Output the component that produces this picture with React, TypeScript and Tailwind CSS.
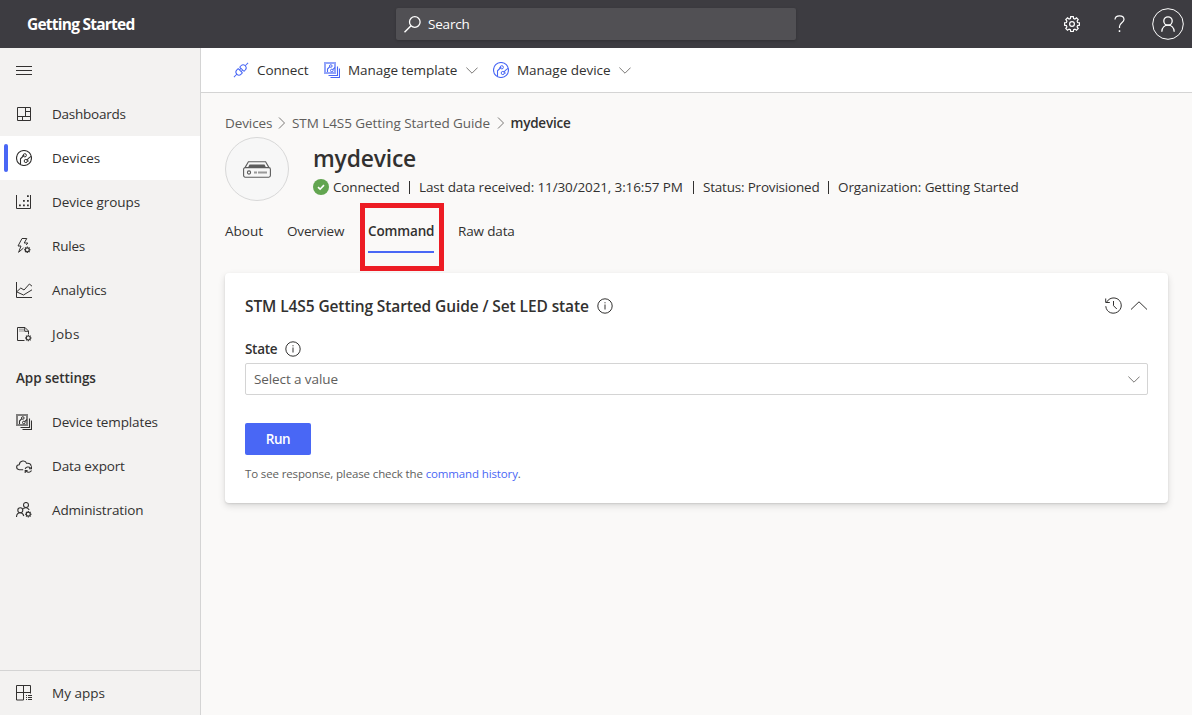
import type { ReactNode } from 'react';

type IconProps = { className?: string; children: ReactNode; size?: number };

function Icon({ className = '', children, size = 16 }: IconProps) {
  return (
    <svg
      width={size}
      height={size}
      viewBox={`0 0 ${size} ${size}`}
      fill="none"
      stroke="currentColor"
      strokeWidth="1"
      className={`block shrink-0 ${className}`}
    >
      {children}
    </svg>
  );
}

function MiniGear({ x, y }: { x: number; y: number }) {
  return (
    <g transform={`translate(${x} ${y})`}>
      <circle r="2" strokeWidth="1.2" />
      <path d="M0-3.3V-2M0 2V3.3M-3.3 0H-2M2 0H3.3M-2.3-2.3L-1.4-1.4M1.4 1.4L2.3 2.3M-2.3 2.3L-1.4 1.4M1.4-1.4L2.3-2.3" strokeWidth="1.1" />
    </g>
  );
}

const DashboardIcon = () => (
  <Icon>
    <path d="M1.5 1.5H14.5V14.5H1.5ZM9.5 1.5V10.5M9.5 5.5H14.5M1.5 10.5H14.5M6.5 10.5V14.5" />
  </Icon>
);
const DeviceIcon = () => (
  <Icon>
    <circle cx="8" cy="8" r="7.5" strokeWidth="1.1" />
    <circle cx="8.8" cy="5.3" r="1.6" />
    <circle cx="9.8" cy="11" r="1.6" />
    <path d="M7.3 6L4.5 8.8V14.2M11 9.8L13 7.8L15 6.4M8.3 5.5H6.5M11.3 11H12.8" strokeWidth="1.1" />
  </Icon>
);
const GroupsIcon = () => (
  <Icon>
    <path d="M.5 1V14.5H14.5V1" />
    <path
      d="M3 10.5h1.8v1.8H3zM7 10.5h1.8v1.8H7zM11 10.5h1.8v1.8H11zM7 6h1.8v1.8H7zM11 6h1.8v1.8H11zM11 1.2h1.8V3H11z"
      fill="currentColor"
      stroke="none"
    />
  </Icon>
);
const RulesIcon = () => (
  <Icon>
    <path d="M6 .5H10.8L8.2 5H11.8L10.2 7M6 .5L2 8H5L2.6 14.3L7.5 10" />
    <MiniGear x={11.3} y={11.8} />
  </Icon>
);
const AnalyticsIcon = () => (
  <Icon>
    <path d="M.5 0V15.5H16M1 9.5L4.8 6L8 8L13.4 2L16 4.2M1 10L7.5 13L16 7.8" />
  </Icon>
);
const JobsIcon = () => (
  <Icon>
    <path d="M8.5 14.5H1.5V1.5H9L12.5 5V8.3M8.7 1.5V5.3H12.5" />
    <path d="M3.5 3.2H8M3.5 5H8" strokeDasharray="1 1" />
    <MiniGear x={12.3} y={12} />
  </Icon>
);
const TemplatesIcon = () => (
  <Icon>
    <path d="M1 1H11V11H1Z" strokeWidth="2" opacity=".6" />
    <circle cx="6.8" cy="4" r="1.3" />
    <circle cx="7.8" cy="8.5" r="1.3" />
    <path d="M5.8 4.6L3.5 7V10M8.7 7.6L11 5.5M13.5 4.5V13.5H4.5M15.5 6.5V15.5H6.5" strokeWidth="1.1" />
  </Icon>
);
const ExportIcon = () => (
  <Icon>
    <path d="M7.2 11.7H3.3C-.3 11.2-.2 6.9 3.2 6.7C3.8 2.3 9.4 1.7 10.6 5.3C13 4.9 14.8 6.2 15.2 7.9" strokeWidth="1.1" />
    <path d="M9.2 11C9.8 8.9 12.8 8.2 14.5 10M15.5 8.2V10.7H13M15.5 12.5C14.6 14.4 11.8 14.9 10.1 13.2M9.2 15V12.6H11.6" strokeWidth="1.1" />
  </Icon>
);
const AdminIcon = () => (
  <Icon>
    <circle cx="10" cy="3" r="2.5" strokeWidth="1.1" />
    <circle cx="4.3" cy="8.2" r="2.5" strokeWidth="1.1" />
    <path d="M.5 15C.6 12 2.2 10.8 4.3 10.8C6.3 10.8 7.3 12 7.8 14M7.3 6.8C8.6 5.3 11.6 5.2 13.2 8" strokeWidth="1.1" />
    <MiniGear x={12.3} y={12.2} />
  </Icon>
);
const MyAppsIcon = () => (
  <Icon>
    <path d="M7.5 15H.5V.5H14.5V8.5M7.5.5V15M.5 7.5H14.5" />
    <path d="M10 10.5H11M12 10.5H16M10 12.5H11M12 12.5H16M10 14.5H11M12 14.5H16" />
  </Icon>
);
const PlugIcon = () => (
  <Icon>
    <g transform="rotate(-45 8 8)">
      <path d="M-2 8H2M14 8H18M7 4.7V11.3M7 5H5.2C1 5 1 11 5.2 11H7M9.2 4.7V11.3M9.2 5H11C15 5 15 11 11 11H9.2M7 6.8H9.2M7 9.2H9.2" />
    </g>
  </Icon>
);

const Chevron = ({ className = '' }: { className?: string }) => (
  <svg width="12" height="7" viewBox="0 0 12 7" fill="none" stroke="currentColor" className={`block shrink-0 ${className}`}>
    <path d="M.4.6L6 6.2L11.6.6" />
  </svg>
);
const CrumbChevron = () => (
  <svg width="8" height="12" viewBox="0 0 8 12" fill="none" stroke="currentColor" className="block shrink-0 text-[#7a7876]">
    <path d="M1 .5L6.5 6L1 11.5" />
  </svg>
);
const InfoIcon = () => (
  <Icon>
    <circle cx="8" cy="8" r="7.2" />
    <path d="M8 6.5V11.5M8 4.2V5.3" />
  </Icon>
);

function NavItem({ icon, label, active, tracking = 'tracking-[-0.12px]' }: { icon: ReactNode; label: string; active?: boolean; tracking?: string }) {
  return (
    <div className={`relative flex h-11 shrink-0 items-center gap-5 pl-4 ${active ? 'bg-white font-medium' : ''}`}>
      {active && <span className="absolute top-2 left-1 h-7 w-1 rounded-[2px] bg-[#4967f5]" />}
      {icon}
      <span className={tracking}>{label}</span>
    </div>
  );
}

export default function App() {
  return (
    <div className="flex h-[715px] w-[1192px] flex-col overflow-hidden bg-[#faf9f8] font-['Open_Sans','Noto_Sans',sans-serif] text-[13.5px] leading-5 tracking-[-0.12px] whitespace-nowrap text-[#323130]">
      <header className="flex h-12 shrink-0 items-center bg-[#3d3c41] pl-[27px] text-white">
        <div className="w-[369px] text-[15.5px] font-bold tracking-[-0.76px]">Getting Started</div>
        <div className="flex h-8 w-[400px] items-center gap-[7px] rounded-[2px] bg-[#515054] pl-2 shadow-[0_1px_3px_rgba(0,0,0,0.2)]">
          <Icon size={17}>
            <circle cx="10.8" cy="6" r="5.3" strokeWidth="1.3" />
            <path d="M7 9.8L.5 16.3" strokeWidth="1.5" />
          </Icon>
          <span className="tracking-[-0.2px]">Search</span>
        </div>
        <div className="ml-[268px] flex items-center">
          <Icon>
            <path
              d="M6.7.6H9.3L9.6 2.5L10.9 3L12.5 1.9L14.2 3.6L13.1 5.2L13.6 6.5L15.5 6.8V9.2L13.6 9.6L13.1 10.9L14.2 12.5L12.5 14.2L10.9 13.1L9.6 13.6L9.3 15.5H6.7L6.4 13.6L5.1 13.1L3.5 14.2L1.8 12.5L2.9 10.9L2.4 9.6L.5 9.2V6.8L2.4 6.5L2.9 5.2L1.8 3.6L3.5 1.9L5.1 3L6.4 2.5Z"
              strokeWidth="1.2"
            />
            <circle cx="8" cy="8" r="2.4" strokeWidth="1.2" />
          </Icon>
          <svg width="12" height="18" viewBox="0 0 12 18" fill="none" stroke="currentColor" strokeWidth="1.2" className="ml-[34px] block">
            <path d="M1 4.5C1.2-.4 10-.4 10 4.5C10 7.7 5.5 8 5.5 11.5V13" />
            <path d="M5.5 15.2V17" strokeWidth="1.5" />
          </svg>
          <Icon size={32} className="ml-[26px]">
            <circle cx="16" cy="16" r="15.3" />
            <circle cx="16" cy="13" r="4.2" strokeWidth="1.3" />
            <path d="M9.8 23.7C10.4 15 21.6 15 22.2 23.7" strokeWidth="1.3" />
          </Icon>
        </div>
      </header>

      <div className="flex min-h-0 flex-1">
        <nav className="flex w-[201px] shrink-0 flex-col border-r border-[#d4d4d4] bg-[#f3f2f1]">
          <div className="flex h-11 shrink-0 items-center pl-4">
            <Icon>
              <path d="M0 4.5H16M0 8.5H16M0 12.5H16" />
            </Icon>
          </div>
          <NavItem icon={<DashboardIcon />} label="Dashboards" tracking="tracking-[-0.24px]" />
          <NavItem icon={<DeviceIcon />} label="Devices" active tracking="tracking-[0.05px]" />
          <NavItem icon={<GroupsIcon />} label="Device groups" tracking="tracking-[-0.07px]" />
          <NavItem icon={<RulesIcon />} label="Rules" tracking="tracking-[-0.2px]" />
          <NavItem icon={<AnalyticsIcon />} label="Analytics" tracking="tracking-[-0.1px]" />
          <NavItem icon={<JobsIcon />} label="Jobs" tracking="tracking-[0.3px]" />
          <div className="flex h-11 shrink-0 items-center pl-4 font-semibold tracking-[-0.07px]">App settings</div>
          <NavItem icon={<TemplatesIcon />} label="Device templates" tracking="tracking-[-0.13px]" />
          <NavItem icon={<ExportIcon />} label="Data export" tracking="tracking-[-0.16px]" />
          <NavItem icon={<AdminIcon />} label="Administration" tracking="tracking-[-0.14px]" />
          <div className="mt-auto border-t border-[#d4d4d4]">
            <NavItem icon={<MyAppsIcon />} label="My apps" tracking="tracking-[0px]" />
          </div>
        </nav>

        <main className="flex min-w-0 flex-1 flex-col">
          <div className="flex h-[45px] shrink-0 items-center border-b border-[#d4d4d4] bg-white pl-8">
            <span className="text-[#4967f5]"><PlugIcon /></span>
            <span className="ml-2 w-[67px] tracking-[-0.1px]">Connect</span>
            <span className="text-[#4967f5]"><TemplatesIcon /></span>
            <span className="ml-2 w-[118px] tracking-[-0.07px]">Manage template</span>
            <Chevron className="text-[#7a7876]" />
            <span className="ml-[15px] text-[#4967f5]"><DeviceIcon /></span>
            <span className="ml-2 w-[102px] tracking-[-0.02px]">Manage device</span>
            <Chevron className="text-[#7a7876]" />
          </div>

          <div className="flex flex-1 flex-col px-6 pt-5">
            <div className="flex h-5 items-center text-[#605e5c]">
              <span className="w-[53px] tracking-[-0.1px]">Devices</span>
              <CrumbChevron />
              <span className="ml-[6px] w-[205px] tracking-[-0.07px]">STM L4S5 Getting Started Guide</span>
              <CrumbChevron />
              <span className="ml-[5.5px] font-semibold tracking-[-0.22px] text-[#323130]">mydevice</span>
            </div>

            <div className="mt-1 flex gap-6">
              <div className="flex h-16 w-16 items-center justify-center rounded-full border border-[#d8d8d8] bg-[#f7f7f7] text-[#5c5c5c]">
                <svg width="28" height="17" viewBox="0 0 28 17" fill="none" stroke="currentColor" strokeWidth="1.1" className="block">
                  <path d="M2 6.6L5.4.8H22.6L26 6.6" />
                  <rect x=".6" y="6.6" width="26.8" height="9.6" rx="1.6" />
                  <path d="M6.5 3.5H21.5L23 6.5H5Z" fill="currentColor" stroke="none" />
                  <circle cx="6" cy="11.5" r="1.6" />
                  <path d="M11 11.5H14M15 11.5H24" strokeWidth="1.8" opacity=".6" />
                </svg>
              </div>
              <div>
                <h1 className="mt-[6px] h-8 text-[22.8px] leading-8 font-semibold tracking-[-0.15px]">mydevice</h1>
                <div className="mt-[2px] flex h-5 items-center">
                  <svg width="16" height="16" viewBox="0 0 16 16" className="block">
                    <circle cx="8" cy="8" r="8" fill="#62a550" />
                    <path d="M5 8.2L7.1 10.2L11 6.1" fill="none" stroke="#fff" strokeWidth="1.6" />
                  </svg>
                  <span className="ml-1 w-[76px] tracking-[-0.15px]">Connected</span>
                  <span className="h-[13px] w-px bg-[#323130]" />
                  <span className="ml-[9px] w-[274px] tracking-[-0.13px]">Last data received: 11/30/2021, 3:16:57 PM</span>
                  <span className="h-[13px] w-px bg-[#323130]" />
                  <span className="ml-[9px] w-[125px] tracking-[-0.2px]">Status: Provisioned</span>
                  <span className="h-[13px] w-px bg-[#323130]" />
                  <span className="ml-[9px] tracking-[-0.1px]">Organization: Getting Started</span>
                </div>
              </div>
            </div>

            <div className="mt-2 flex h-11 items-center">
              <span className="w-[62px] tracking-[0px]">About</span>
              <span className="w-[81px] tracking-[-0.15px]">Overview</span>
              <div className="relative w-[66px]">
                <span className="font-semibold tracking-[-0.15px]">Command</span>
                <span className="absolute top-[30px] left-0 h-0.5 w-[66px] bg-[#4967f5]" />
                <span className="absolute top-[-18px] left-[-8px] h-[68px] w-[84px] border-[5px] border-[#ed1c24]" />
              </div>
              <span className="ml-6 tracking-[-0.15px]">Raw data</span>
            </div>

            <section className="mt-5 h-[230px] w-[943px] rounded-[4px] bg-white px-5 shadow-[0_3px_7px_rgba(0,0,0,0.13),0_1px_2px_rgba(0,0,0,0.1)]">
              <div className="flex h-[65px] items-center">
                <h2 className="w-[352px] text-[15.5px] font-semibold tracking-[-0.1px]">STM L4S5 Getting Started Guide / Set LED state</h2>
                <InfoIcon />
                <Icon size={17} className="ml-auto">
                  <path d="M1.7 5C5-.8 13.3-.2 15.7 5.5C18.2 12 12 17.8 5.7 15.8C2.8 14.8 1 12.2.8 9.2M.7 1.5V5.5H4.8M8.5 4V8.7L11.8 12" />
                </Icon>
                <svg width="18" height="9" viewBox="0 0 18 9" fill="none" stroke="currentColor" className="ml-2 block">
                  <path d="M1 8.5L9 .8L17 8.5" />
                </svg>
              </div>
              <div className="mt-px flex h-5 items-center">
                <span className="w-[39.5px] font-semibold tracking-[-0.3px]">State</span>
                <InfoIcon />
              </div>
              <div className="mt-1 flex h-8 items-center justify-between rounded-[2px] border border-[#d4d4d4] pr-[7px] pl-2 text-[#605e5c]">
                <span className="tracking-[-0.1px]">Select a value</span>
                <Chevron className="text-[#7a7876]" />
              </div>
              <button className="mt-7 flex h-8 w-[66px] items-center justify-center rounded-[2px] bg-[#4967f5] font-semibold tracking-[-0.4px] text-white">
                Run
              </button>
              <p className="mt-[9px] text-[11.5px] tracking-[-0.13px] text-[#605e5c]">
                To see response, please check the <a className="text-[#4967f5]">command history</a>.
              </p>
            </section>
          </div>
        </main>
      </div>
    </div>
  );
}
